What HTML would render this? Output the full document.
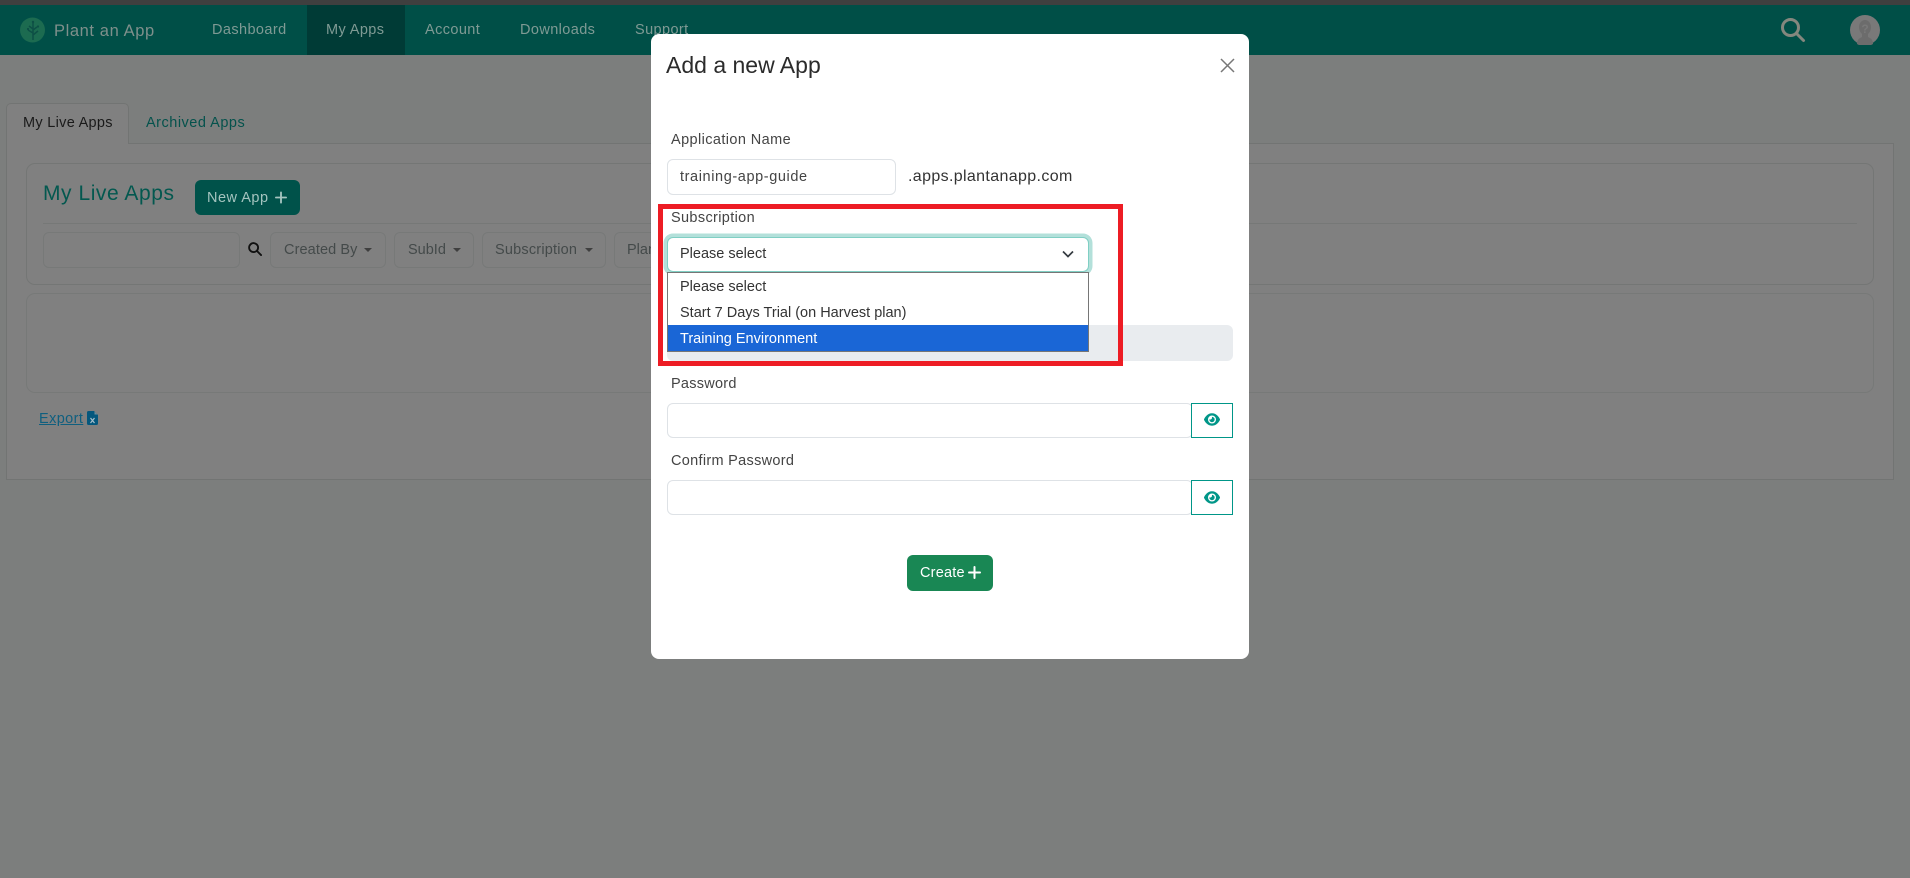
<!DOCTYPE html>
<html lang="en">
<head>
<meta charset="utf-8">
<title>Add a new App</title>
<style>
*{box-sizing:border-box}
html,body{margin:0;padding:0;width:1910px;height:878px;overflow:hidden;background:#7c7e7d;font-family:"Liberation Sans",sans-serif}
.a{position:absolute}
.t{position:absolute;white-space:nowrap;line-height:20px;height:20px}
#top{left:0;top:0;width:1910px;height:5px;background:#3f3f3f}
#nav{left:0;top:5px;width:1910px;height:50px;background:#004f47}
#active{left:307px;top:5px;width:98px;height:50px;background:#003b36}
.nl{color:#7f9a94;font-size:14.5px;letter-spacing:.4px;top:20px}
#panel{left:6px;top:143px;width:1888px;height:337px;background:#808080;border:1px solid #727473}
#tab{left:6px;top:103px;width:123px;height:41px;background:#808080;border:1px solid #727473;border-bottom:none;border-radius:5px 5px 0 0}
.card{left:27px;width:1847px;border:1px solid #747675;border-radius:9px}
.fb{top:232px;height:36px;border:1px solid #777978;border-radius:6px}
.ft{color:#444a4a;font-size:14.5px;top:240px}
.caret{top:248px;width:0;height:0;border-left:4px solid transparent;border-right:4px solid transparent;border-top:4.5px solid #3f3f3f}
#modal{left:651px;top:34px;width:598px;height:625px;background:#fff;border-radius:8px}
.lb{color:#444;font-size:14.5px}
.in{left:667px;height:36px;background:#fff;border:1px solid #dee2e6;border-radius:6px}
.eye{left:1191px;width:42px;height:36px;background:#fff;border:1px solid #009688}
.opt{color:#333;font-size:14.5px;left:680px}
</style>
</head>
<body>
<div class="a" id="top"></div>
<div class="a" id="nav"></div>
<div class="a" id="active"></div>
<svg class="a" style="left:20px;top:17px" width="26" height="26" viewBox="0 0 26 26">
<circle cx="12.5" cy="13" r="12.5" fill="#1c6b50"/>
<path d="M13 5v18M13 12l-4-3M13 16l-5-3M13 13l4-3M13 18l5-4" stroke="#0d4f45" stroke-width="1.5" fill="none"/>
<circle cx="13" cy="5" r="1.2" fill="#0d4f45"/><circle cx="8" cy="12" r="1.1" fill="#0d4f45"/><circle cx="18" cy="9.5" r="1.1" fill="#0d4f45"/>
</svg>
<div class="t" style="left:54px;top:21px;font-size:16.5px;color:#7e8f8b;letter-spacing:.6px">Plant an App</div>
<div class="t nl" style="left:212px">Dashboard</div>
<div class="t nl" style="left:326px">My Apps</div>
<div class="t nl" style="left:425px">Account</div>
<div class="t nl" style="left:520px">Downloads</div>
<div class="t nl" style="left:635px">Support</div>
<svg class="a" style="left:1780px;top:17px" width="27" height="27" viewBox="0 0 27 27" fill="none" stroke="#84877e" stroke-width="3">
<circle cx="10.5" cy="10.5" r="8"/><path d="M16.5 16.5l7 7" stroke-linecap="round"/>
</svg>
<svg class="a" style="left:1850px;top:15px" width="30" height="30" viewBox="0 0 30 30">
<circle cx="15" cy="15" r="15" fill="#797979"/>
<path d="M7 29c0-5 3-6 5-7v-3c-2-2-3-4-3-7 0-4 3-7 6-7s6 3 6 7c0 3-1 5-3 7v3c2 1 5 2 5 7a15 15 0 0 1-16 0z" fill="#6c6c6c"/>
<text x="15" y="18" font-size="12" font-weight="bold" text-anchor="middle" fill="#797979" font-family="Liberation Sans">?</text>
</svg>

<div class="a" id="panel"></div>
<div class="a" id="tab"></div>
<div class="t" style="left:23px;top:113px;font-size:14.5px;color:#1a1a1a;letter-spacing:.3px">My Live Apps</div>
<div class="t" style="left:146px;top:113px;font-size:14.5px;color:#04524c;letter-spacing:.5px">Archived Apps</div>

<div class="a card" style="left:26px;width:1848px;top:163px;height:122px"></div>
<div class="a card" style="left:26px;width:1848px;top:293px;height:100px;border-color:#777978"></div>
<div class="t" style="left:43px;top:184px;font-size:21px;color:#03584f;letter-spacing:.55px">My Live Apps</div>
<div class="a" style="left:195px;top:180px;width:105px;height:35px;background:#00524a;border-radius:6px"></div>
<div class="t" style="left:207px;top:188px;font-size:14.5px;color:#a4c4bf;letter-spacing:.5px">New App</div>
<svg class="a" style="left:275px;top:191px" width="12" height="13" viewBox="0 0 13 13"><path d="M6.500 1v11M1 6.500h11" stroke="#a4c4bf" stroke-width="2" stroke-linecap="round"/></svg>
<div class="a" style="left:43px;top:223px;width:1814px;height:1px;background:#767877"></div>

<div class="a fb" style="left:43px;width:197px"></div>
<svg class="a" style="left:248px;top:242px" width="14" height="14" viewBox="0 0 15 15" fill="none" stroke="#111" stroke-width="2"><circle cx="6" cy="6" r="4.800"/><path d="M9.500 9.500L14 14" stroke-linecap="round"/></svg>
<div class="a fb" style="left:270px;width:116px"></div>
<div class="t ft" style="left:284px;letter-spacing:.1px">Created By</div>
<div class="a caret" style="left:364px"></div>
<div class="a fb" style="left:394px;width:80px"></div>
<div class="t ft" style="left:408px">SubId</div>
<div class="a caret" style="left:453px"></div>
<div class="a fb" style="left:482px;width:124px"></div>
<div class="t ft" style="left:495px;letter-spacing:.2px">Subscription</div>
<div class="a caret" style="left:585px"></div>
<div class="a fb" style="left:614px;width:60px"></div>
<div class="t ft" style="left:627px">Plan</div>

<div class="t" style="left:39px;top:409px;font-size:14.5px;color:#0f5f7f;text-decoration:underline;letter-spacing:.4px">Export</div>
<svg class="a" style="left:87px;top:411px" width="11" height="14" viewBox="0 0 11 14"><path d="M1.500 0H7l4 4v8.500a1.500 1.500 0 0 1-1.500 1.500h-8A1.500 1.500 0 0 1 0 12.500v-11A1.500 1.500 0 0 1 1.500 0z" fill="#04577d"/><path d="M7.500 .5v3h3z" fill="#6d8d9c"/><path d="M3.500 7l4 5M7.500 7l-4 5" stroke="#a9c0cb" stroke-width="1.200"/></svg>

<div class="a" id="modal"></div>
<div class="t" style="left:666px;top:53px;font-size:23px;line-height:24px;height:24px;color:#2b2b2b">Add a new App</div>
<svg class="a" style="left:1220px;top:58px" width="15" height="15" viewBox="0 0 15 15"><path d="M1 1l13 13M14 1L1 14" stroke="#777" stroke-width="1.500"/></svg>

<div class="t lb" style="left:671px;top:130px;letter-spacing:.4px">Application Name</div>
<div class="a in" style="top:159px;width:229px"></div>
<div class="t" style="left:680px;top:167px;font-size:14.5px;color:#444;letter-spacing:.6px">training-app-guide</div>
<div class="t" style="left:908px;top:167px;font-size:16px;color:#333;letter-spacing:.36px">.apps.plantanapp.com</div>

<div class="a in" style="top:325px;width:566px;height:36px;background:#e9ecef;border-color:#e9ecef"></div>

<div class="t lb" style="left:671px;top:208px;letter-spacing:.35px">Subscription</div>
<div class="a" style="left:667px;top:237px;width:422px;height:35px;background:#fff;border:1px solid #80cfc4;border-radius:6px;box-shadow:0 0 0 3.500px #b3e0da"></div>
<div class="t opt" style="top:244px">Please select</div>
<svg class="a" style="left:1062px;top:250px" width="12" height="8" viewBox="0 0 12 8"><path d="M1 1.500l5 5 5-5" fill="none" stroke="#343a40" stroke-width="1.700"/></svg>
<div class="a" style="left:667px;top:272px;width:422px;height:80px;background:#fff;border:1px solid #767676"></div>
<div class="t opt" style="top:277px">Please select</div>
<div class="t opt" style="top:303px">Start 7 Days Trial (on Harvest plan)</div>
<div class="a" style="left:668px;top:325px;width:420px;height:26px;background:#1a66d6"></div>
<div class="t opt" style="top:329px;color:#fff">Training Environment</div>

<div class="a" style="left:658px;top:204px;width:465px;height:162px;border:5px solid #ed1c24"></div>

<div class="t lb" style="left:671px;top:374px;letter-spacing:.25px">Password</div>
<div class="a in" style="top:403px;width:526px;height:35px"></div>
<div class="a eye" style="top:403px;height:35px"></div>
<svg class="a" style="left:1204px;top:412px" width="16" height="15" viewBox="0 0 576 512"><path fill="#009688" d="M288 32c-80.800 0-145.500 36.800-192.600 80.600C48.600 156 17.300 208 2.500 243.700c-3.300 7.900-3.300 16.700 0 24.600C17.300 304 48.600 356 95.400 399.400C142.500 443.200 207.200 480 288 480s145.500-36.800 192.600-80.600c46.800-43.500 78.100-95.400 93-131.100c3.300-7.900 3.300-16.700 0-24.600c-14.900-35.700-46.200-87.700-93-131.100C433.500 68.800 368.800 32 288 32zM144 256a144 144 0 1 1 288 0 144 144 0 1 1 -288 0zm144-64c0 35.300-28.700 64-64 64c-7.100 0-13.900-1.200-20.300-3.300c-5.500-1.800-11.900 1.600-11.700 7.400c.3 6.900 1.300 13.800 3.200 20.700c13.700 51.200 66.400 81.600 117.600 67.900s81.600-66.400 67.900-117.600c-11.100-41.500-47.800-69.400-88.600-71.100c-5.800-.2-9.200 6.100-7.400 11.700c2.100 6.400 3.300 13.200 3.300 20.300z"/></svg>

<div class="t lb" style="left:671px;top:451px;letter-spacing:.3px">Confirm Password</div>
<div class="a in" style="top:480px;width:526px;height:35px"></div>
<div class="a eye" style="top:480px;height:35px"></div>
<svg class="a" style="left:1204px;top:489.500px" width="16" height="15" viewBox="0 0 576 512"><path fill="#009688" d="M288 32c-80.800 0-145.500 36.800-192.600 80.600C48.600 156 17.300 208 2.500 243.700c-3.300 7.900-3.300 16.700 0 24.600C17.300 304 48.600 356 95.400 399.400C142.500 443.200 207.200 480 288 480s145.500-36.800 192.600-80.600c46.800-43.500 78.100-95.400 93-131.100c3.300-7.900 3.300-16.700 0-24.600c-14.900-35.700-46.200-87.700-93-131.100C433.500 68.800 368.800 32 288 32zM144 256a144 144 0 1 1 288 0 144 144 0 1 1 -288 0zm144-64c0 35.300-28.700 64-64 64c-7.100 0-13.900-1.200-20.300-3.300c-5.500-1.800-11.900 1.600-11.700 7.400c.3 6.900 1.300 13.800 3.200 20.700c13.700 51.200 66.400 81.600 117.600 67.900s81.600-66.400 67.900-117.600c-11.100-41.500-47.800-69.400-88.600-71.100c-5.800-.2-9.200 6.100-7.400 11.700c2.100 6.400 3.300 13.200 3.300 20.300z"/></svg>

<div class="a" style="left:907px;top:555px;width:86px;height:36px;background:#198754;border-radius:6px"></div>
<div class="t" style="left:920px;top:563px;font-size:14.5px;color:#fff;letter-spacing:.2px">Create</div>
<svg class="a" style="left:968px;top:566px" width="13" height="13" viewBox="0 0 13 13"><path d="M6.500 1v11M1 6.500h11" stroke="#fff" stroke-width="2" stroke-linecap="round"/></svg>
</body>
</html>
